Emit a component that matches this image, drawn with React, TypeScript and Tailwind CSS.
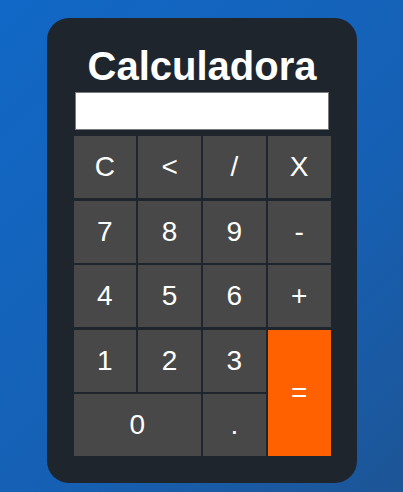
import React from "react";

const keys = [
  { label: "C" },
  { label: "<" },
  { label: "/" },
  { label: "X" },
  { label: "7" },
  { label: "8" },
  { label: "9" },
  { label: "-" },
  { label: "4" },
  { label: "5" },
  { label: "6" },
  { label: "+" },
  { label: "1" },
  { label: "2" },
  { label: "3" },
  { label: "=", cls: "row-span-2 bg-[#ff6000]" },
  { label: "0", cls: "col-span-2 bg-[#484848]" },
  { label: "." },
];

const App = () => {
  return (
    <main
      className="min-h-[492px] w-full flex justify-center pt-[18px] bg-[linear-gradient(135deg,#1168c6_0%,#1660b4_60%,#1d5596_100%)]"
      style={{ fontFamily: '"Liberation Sans", Arial, sans-serif' }}
    >
      <div className="w-[310px] h-[465px] bg-[#1e252d] rounded-[22px] pt-[25px] pl-[27px] pr-[26px]">
        <h1 className="text-center text-white font-bold text-[40px] leading-[46px]">
          Calculadora
        </h1>
        <div className="mt-[3px] ml-[1px] w-[254px] h-[38px] bg-white border border-[#7a7a7a]" />
        <div className="mt-[6px] grid grid-cols-4 auto-rows-[62px] gap-x-[2px] gap-y-[2.5px]">
          {keys.map((k) => (
            <button
              key={k.label}
              className={`flex items-center justify-center text-white text-[28px] ${
                k.cls ?? "bg-[#484848]"
              }`}
            >
              {k.label}
            </button>
          ))}
        </div>
      </div>
    </main>
  );
};

export default App;
